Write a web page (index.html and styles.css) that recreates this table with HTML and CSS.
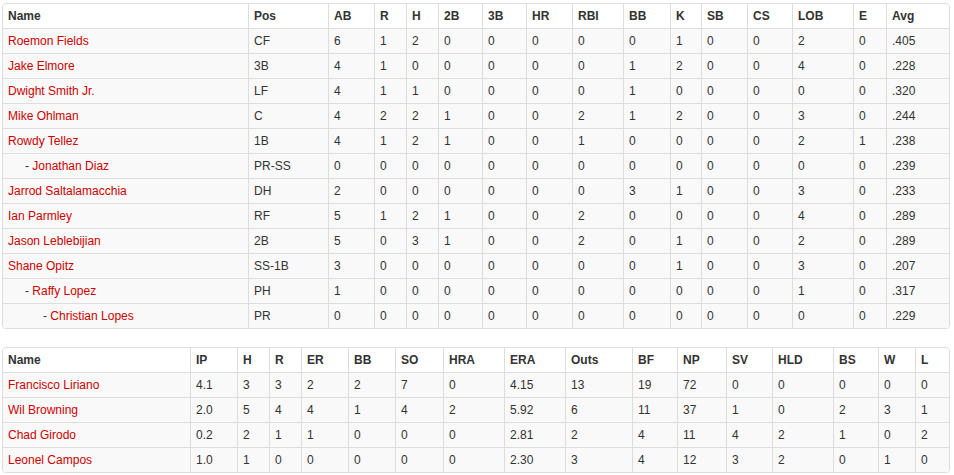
FILE: index.html
```html
<!DOCTYPE html>
<html>
<head>
<meta charset="utf-8">
<link rel="stylesheet" href="styles.css">
</head>
<body>
<div class="page">
  <div class="panel">
    <table class="stats bat">
      <thead>
        <tr><th>Name</th><th>Pos</th><th>AB</th><th>R</th><th>H</th><th>2B</th><th>3B</th><th>HR</th><th>RBI</th><th>BB</th><th>K</th><th>SB</th><th>CS</th><th>LOB</th><th>E</th><th>Avg</th></tr>
      </thead>
      <tbody>
        <tr><td><a class="player">Roemon Fields</a></td><td>CF</td><td>6</td><td>1</td><td>2</td><td>0</td><td>0</td><td>0</td><td>0</td><td>0</td><td>1</td><td>0</td><td>0</td><td>2</td><td>0</td><td>.405</td></tr>
        <tr><td><a class="player">Jake Elmore</a></td><td>3B</td><td>4</td><td>1</td><td>0</td><td>0</td><td>0</td><td>0</td><td>0</td><td>1</td><td>2</td><td>0</td><td>0</td><td>4</td><td>0</td><td>.228</td></tr>
        <tr><td><a class="player">Dwight Smith Jr.</a></td><td>LF</td><td>4</td><td>1</td><td>1</td><td>0</td><td>0</td><td>0</td><td>0</td><td>1</td><td>0</td><td>0</td><td>0</td><td>0</td><td>0</td><td>.320</td></tr>
        <tr><td><a class="player">Mike Ohlman</a></td><td>C</td><td>4</td><td>2</td><td>2</td><td>1</td><td>0</td><td>0</td><td>2</td><td>1</td><td>2</td><td>0</td><td>0</td><td>3</td><td>0</td><td>.244</td></tr>
        <tr><td><a class="player">Rowdy Tellez</a></td><td>1B</td><td>4</td><td>1</td><td>2</td><td>1</td><td>0</td><td>0</td><td>1</td><td>0</td><td>0</td><td>0</td><td>0</td><td>2</td><td>1</td><td>.238</td></tr>
        <tr><td><span class="sub1">- </span><a class="player">Jonathan Diaz</a></td><td>PR-SS</td><td>0</td><td>0</td><td>0</td><td>0</td><td>0</td><td>0</td><td>0</td><td>0</td><td>0</td><td>0</td><td>0</td><td>0</td><td>0</td><td>.239</td></tr>
        <tr><td><a class="player">Jarrod Saltalamacchia</a></td><td>DH</td><td>2</td><td>0</td><td>0</td><td>0</td><td>0</td><td>0</td><td>0</td><td>3</td><td>1</td><td>0</td><td>0</td><td>3</td><td>0</td><td>.233</td></tr>
        <tr><td><a class="player">Ian Parmley</a></td><td>RF</td><td>5</td><td>1</td><td>2</td><td>1</td><td>0</td><td>0</td><td>2</td><td>0</td><td>0</td><td>0</td><td>0</td><td>4</td><td>0</td><td>.289</td></tr>
        <tr><td><a class="player">Jason Leblebijian</a></td><td>2B</td><td>5</td><td>0</td><td>3</td><td>1</td><td>0</td><td>0</td><td>2</td><td>0</td><td>1</td><td>0</td><td>0</td><td>2</td><td>0</td><td>.289</td></tr>
        <tr><td><a class="player">Shane Opitz</a></td><td>SS-1B</td><td>3</td><td>0</td><td>0</td><td>0</td><td>0</td><td>0</td><td>0</td><td>0</td><td>1</td><td>0</td><td>0</td><td>3</td><td>0</td><td>.207</td></tr>
        <tr><td><span class="sub1">- </span><a class="player">Raffy Lopez</a></td><td>PH</td><td>1</td><td>0</td><td>0</td><td>0</td><td>0</td><td>0</td><td>0</td><td>0</td><td>0</td><td>0</td><td>0</td><td>1</td><td>0</td><td>.317</td></tr>
        <tr><td><span class="sub2">- </span><a class="player">Christian Lopes</a></td><td>PR</td><td>0</td><td>0</td><td>0</td><td>0</td><td>0</td><td>0</td><td>0</td><td>0</td><td>0</td><td>0</td><td>0</td><td>0</td><td>0</td><td>.229</td></tr>
      </tbody>
    </table>
  </div>

  <div class="panel">
    <table class="stats pitch">
      <thead>
        <tr><th>Name</th><th>IP</th><th>H</th><th>R</th><th>ER</th><th>BB</th><th>SO</th><th>HRA</th><th>ERA</th><th>Outs</th><th>BF</th><th>NP</th><th>SV</th><th>HLD</th><th>BS</th><th>W</th><th>L</th></tr>
      </thead>
      <tbody>
        <tr><td><a class="player">Francisco Liriano</a></td><td>4.1</td><td>3</td><td>3</td><td>2</td><td>2</td><td>7</td><td>0</td><td>4.15</td><td>13</td><td>19</td><td>72</td><td>0</td><td>0</td><td>0</td><td>0</td><td>0</td></tr>
        <tr><td><a class="player">Wil Browning</a></td><td>2.0</td><td>5</td><td>4</td><td>4</td><td>1</td><td>4</td><td>2</td><td>5.92</td><td>6</td><td>11</td><td>37</td><td>1</td><td>0</td><td>2</td><td>3</td><td>1</td></tr>
        <tr><td><a class="player">Chad Girodo</a></td><td>0.2</td><td>2</td><td>1</td><td>1</td><td>0</td><td>0</td><td>0</td><td>2.81</td><td>2</td><td>4</td><td>11</td><td>4</td><td>2</td><td>1</td><td>0</td><td>2</td></tr>
        <tr><td><a class="player">Leonel Campos</a></td><td>1.0</td><td>1</td><td>0</td><td>0</td><td>0</td><td>0</td><td>0</td><td>2.30</td><td>3</td><td>4</td><td>12</td><td>3</td><td>2</td><td>0</td><td>1</td><td>0</td></tr>
      </tbody>
    </table>
  </div>
</div>
</body>
</html>
```
FILE: styles.css
```css
html, body {
  margin: 0;
  padding: 0;
  background: #fff;
}

.page {
  padding: 3px 0 0 2px;
  font-family: "Liberation Sans", Arial, sans-serif;
  font-size: 12px;
  color: #333;
}

.panel {
  width: 948px;
  box-sizing: border-box;
  border: 1px solid #ddd;
  border-radius: 4px;
  overflow: hidden;
  margin-bottom: 18px;
}

.stats {
  width: 946px;
  table-layout: fixed;
  border-collapse: separate;
  border-spacing: 0;
}

.stats th,
.stats td {
  box-sizing: border-box;
  padding: 3px 5px 3px 5px;
  line-height: 18px;
  text-align: left;
  vertical-align: top;
  white-space: nowrap;
  border-left: 1px solid #ddd;
  border-top: 1px solid #ddd;
}

.stats th:first-child,
.stats td:first-child {
  border-left: none;
}

.stats thead th {
  border-top: none;
  font-weight: bold;
  background: #fff;
  color: #333;
}

.stats tbody td {
  background: #f9f9f9;
}

.player {
  color: #cc0000;
  text-decoration: none;
}

.sub1 {
  padding-left: 17px;
}

.sub2 {
  padding-left: 35px;
}

/* batting column widths */
.bat th:nth-child(1) { width: 245px; }
.bat th:nth-child(2) { width: 80px; }
.bat th:nth-child(3) { width: 46px; }
.bat th:nth-child(4) { width: 32px; }
.bat th:nth-child(5) { width: 32px; }
.bat th:nth-child(6) { width: 44px; }
.bat th:nth-child(7) { width: 44px; }
.bat th:nth-child(8) { width: 46px; }
.bat th:nth-child(9) { width: 51px; }
.bat th:nth-child(10) { width: 47px; }
.bat th:nth-child(11) { width: 31px; }
.bat th:nth-child(12) { width: 46px; }
.bat th:nth-child(13) { width: 45px; }
.bat th:nth-child(14) { width: 61px; }
.bat th:nth-child(15) { width: 33px; }
.bat th:nth-child(16) { width: 63px; }

/* pitching column widths */
.pitch th:nth-child(1) { width: 187px; }
.pitch th:nth-child(2) { width: 47px; }
.pitch th:nth-child(3) { width: 32px; }
.pitch th:nth-child(4) { width: 32px; }
.pitch th:nth-child(5) { width: 47px; }
.pitch th:nth-child(6) { width: 47px; }
.pitch th:nth-child(7) { width: 48px; }
.pitch th:nth-child(8) { width: 61px; }
.pitch th:nth-child(9) { width: 61px; }
.pitch th:nth-child(10) { width: 67px; }
.pitch th:nth-child(11) { width: 45px; }
.pitch th:nth-child(12) { width: 49px; }
.pitch th:nth-child(13) { width: 46px; }
.pitch th:nth-child(14) { width: 61px; }
.pitch th:nth-child(15) { width: 45px; }
.pitch th:nth-child(16) { width: 37px; }
.pitch th:nth-child(17) { width: 34px; }
```
